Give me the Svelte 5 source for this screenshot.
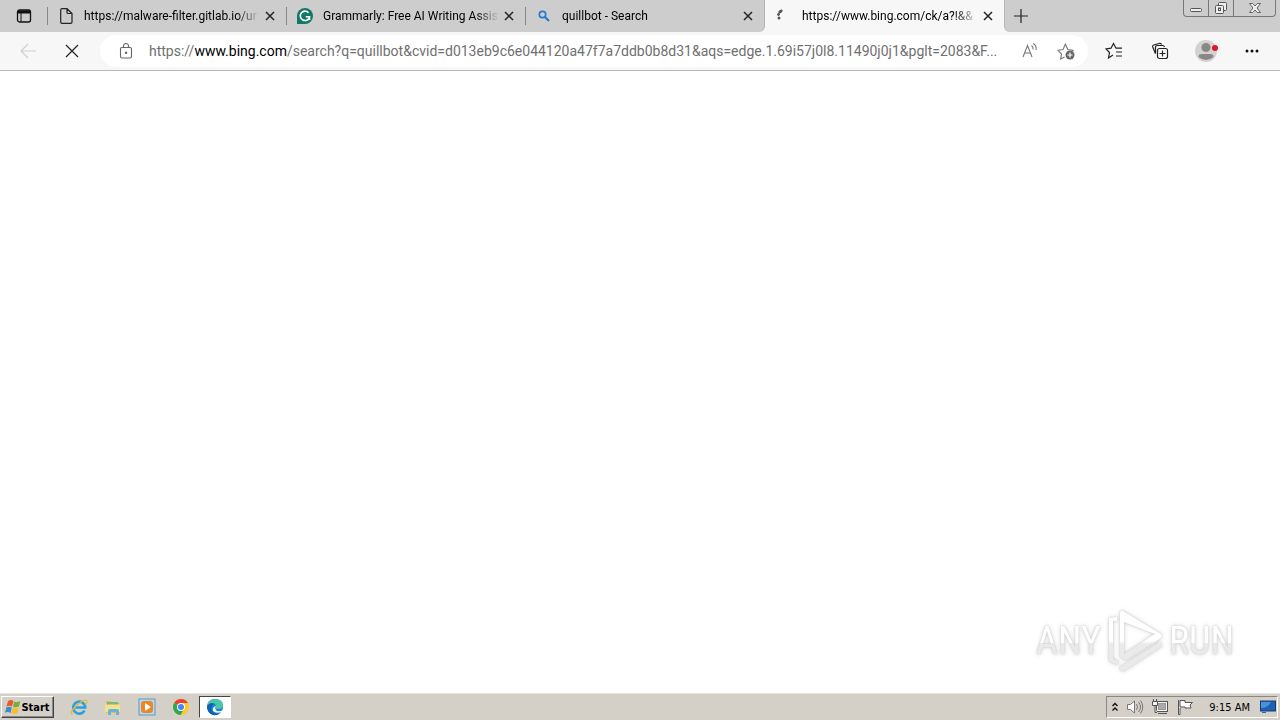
<script lang="ts">
  interface Tab {
    title: string;
    icon: 'page' | 'grammarly' | 'search' | 'loading';
  }

  const tabs: Tab[] = [
    { title: 'https://malware-filter.gitlab.io/ur', icon: 'page' },
    { title: 'Grammarly: Free AI Writing Assist', icon: 'grammarly' },
    { title: 'quillbot - Search', icon: 'search' },
    { title: 'https://www.bing.com/ck/a?!&&', icon: 'loading' },
  ];

  let active = $state(3);
</script>

<div class="desktop">
  <header class="tab-strip">
    <button class="tab-actions" aria-label="Tab actions menu">
      <svg width="16" height="16" viewBox="0 0 16 16" fill="none" stroke="#111">
        <rect x="1.5" y="2" width="13" height="12" rx="2" stroke-width="1.3" />
        <path d="M2 4h12" stroke-width="3" />
        <path d="M5 5v9" />
      </svg>
    </button>
    <div class="tabs">
      {#each tabs as tab, i}
        <div class="tab" class:active={active === i}>
          <button class="tab-label" onclick={() => (active = i)}>
            <span class="favicon">
              {#if tab.icon === 'page'}
                <svg width="16" height="16" viewBox="0 0 16 16" fill="none" stroke="#222" stroke-width="1.2">
                  <path d="M4 .7h5L14 5.5V14q0 1.300-1.300 1.300H4Q2.700 15.300 2.700 14V2Q2.700.7 4 .7M9 .7v3.800q0 1 1 1h4" />
                </svg>
              {:else if tab.icon === 'grammarly'}
                <svg width="16" height="16" viewBox="0 0 16 16">
                  <path d="M8 0a8 8 0 1 1 0 16H0V8a8 8 0 0 1 8-8Z" fill="#117865" />
                  <path d="M11.500 4.700A4.700 4.700 0 1 0 12.500 9.200M8.800 8.800h3.700v3.300" fill="none" stroke="#fff" stroke-width="1.600" />
                </svg>
              {:else if tab.icon === 'search'}
                <svg width="16" height="16" viewBox="0 0 16 16" fill="none" stroke="#2b78d0">
                  <circle cx="6.500" cy="6.500" r="3.200" stroke-width="1.700" />
                  <path d="m9 9 4 4" stroke-width="2.200" />
                </svg>
              {:else}
                <svg width="16" height="16" viewBox="0 0 16 16" fill="#555">
                  <ellipse cx="4.500" cy="3.500" rx="2.400" ry="1.500" transform="rotate(-35 4.500 3.500)" />
                  <circle cx="2.500" cy="6.500" r="1.400" />
                  <circle cx="3" cy="10" r="1.500" />
                </svg>
              {/if}
            </span>
            <span class="tab-title">{tab.title}</span>
          </button>
          <button class="tab-close" aria-label="Close tab">
            <svg width="10" height="10" viewBox="0 0 10 10" stroke="#222" stroke-width="1.500">
              <path d="m1 1 8 8M9 1 1 9" />
            </svg>
          </button>
        </div>
      {/each}
    </div>
    <div class="strip-end">
      <button class="new-tab" aria-label="New tab">
        <svg width="14" height="14" viewBox="0 0 14 14" stroke="#222" stroke-width="1.200">
          <path d="M7 0v14M0 7h14" />
        </svg>
      </button>
      <div class="window-controls">
        <button aria-label="Minimize">
          <svg width="14" height="14" viewBox="0 0 14 14" fill="#eee" stroke="#555">
            <rect x="1.500" y="7.500" width="11" height="3" rx="1" />
          </svg>
        </button>
        <button aria-label="Restore">
          <svg width="14" height="14" viewBox="0 0 14 14" fill="#eee" stroke="#555">
            <rect x="4.500" y="1.500" width="8" height="8" rx="1" />
            <rect x="1.500" y="4.500" width="8" height="8" rx="1" />
            <rect x="4.500" y="7" width="2" height="2.500" />
          </svg>
        </button>
        <button aria-label="Close">
          <svg width="14" height="14" viewBox="0 0 14 14" fill="#eee" stroke="#666">
            <path d="M1.500 2.500h3.200L7 5l2.300-2.500h3.200L9 7l3.500 4.500H9.300L7 9l-2.300 2.500H1.500L5 7Z" />
          </svg>
        </button>
      </div>
    </div>
  </header>

  <div class="toolbar">
    <div class="nav">
      <button class="tool" aria-label="Back" disabled>
        <svg width="18" height="16" viewBox="0 0 18 16" fill="none" stroke="#cfcfcf" stroke-width="1.200">
          <path d="M17 8H2M9 1 2 8l7 7" />
        </svg>
      </button>
      <button class="tool" aria-label="Stop">
        <svg width="14" height="14" viewBox="0 0 14 14" stroke="#222" stroke-width="1.200">
          <path d="m1 1 12 12M13 1 1 13" />
        </svg>
      </button>
    </div>
    <div class="address">
      <button class="lock" aria-label="View site information">
        <svg width="14" height="16" viewBox="0 0 14 16" fill="none" stroke="#666" stroke-width="1.100">
          <rect x="1.500" y="4.500" width="11" height="10.500" rx="1.500" />
          <path d="M4.500 4.500V3a2.500 2.500 0 0 1 5 0v1.500" />
          <circle cx="7" cy="9.700" r=".7" fill="#555" />
        </svg>
      </button>
      <a class="url" href="https://www.bing.com/search?q=quillbot">https://<b>www.bing.com</b>/search?q=quillbot&amp;cvid=d013eb9c6e044120a47f7a7ddb0b8d31&amp;aqs=edge.1.69i57j0l8.11490j0j1&amp;pglt=2083&amp;F...</a>
      <button class="field-action" aria-label="Read aloud">
        <svg width="18" height="18" viewBox="0 0 18 18" fill="none" stroke="#777" stroke-width="1.100">
          <path d="M2 15 6.500 3.500 11 15M3.500 11h6M10.500 3.500q2 1.500 1.500 4M12 1.500q4 2 3 6.500" />
        </svg>
      </button>
      <button class="field-action" aria-label="Add to favorites">
        <svg width="18" height="18" viewBox="0 0 18 18">
          <path d="M7.500 15 3.700 17l.8-5L1 8.300l5-.8 2.400-5.300 2.400 5.300 5.200.8-1.500 1.500" fill="none" stroke="#777" stroke-width="1.100" />
          <circle cx="13" cy="13" r="4.500" fill="#666" />
          <path d="M13 10.500v5M10.500 13h5" stroke="#fff" stroke-width="1.200" />
        </svg>
      </button>
    </div>
    <div class="tools">
      <button class="tool" aria-label="Favorites">
        <svg width="18" height="18" viewBox="0 0 18 18" fill="none" stroke="#222" stroke-width="1.200">
          <path d="m8 13-4.500 3 1-5.500L1 7l5-.8 2.500-4.700L11 6.200h6M11 10h6M11 14h6" />
        </svg>
      </button>
      <button class="tool" aria-label="Collections">
        <svg width="18" height="18" viewBox="0 0 18 18" fill="none" stroke="#222" stroke-width="1.200">
          <path d="M4.500 11.500 1.700 5q-.5-1.500 1-2L8 1.500q2-.6 2.700 1" />
          <path d="M4.500 11.500V5.500q0-2 2-2h5q1.500 0 2 1.500" />
          <rect x="6.500" y="6.500" width="10" height="10" rx="2" />
          <path d="M11.500 8.500v6M8.500 11.500h6" />
        </svg>
      </button>
      <button class="tool" aria-label="Profile">
        <svg width="24" height="24" viewBox="0 0 24 24">
          <circle cx="12" cy="12" r="11" fill="#d4d2d0" />
          <circle cx="12" cy="8.500" r="4.500" fill="#8a8886" />
          <path d="M4.500 18q0-3 3-3h9q3 0 3 3a11 11 0 0 1-15 0Z" fill="#8a8886" />
          <circle cx="21" cy="9" r="3" fill="#e01525" />
        </svg>
      </button>
      <button class="tool" aria-label="Settings and more">
        <svg width="14" height="4" viewBox="0 0 14 4" fill="#111">
          <circle cx="2" cy="2" r="1.500" /><circle cx="7" cy="2" r="1.500" /><circle cx="12" cy="2" r="1.500" />
        </svg>
      </button>
    </div>
  </div>

  <main class="page">
    <div class="watermark">
      <span>ANY</span>
      <svg width="56" height="62" viewBox="0 0 56 62" fill="none" stroke-linejoin="round">
        <defs>
          <linearGradient id="shine" x1="0" y1="0" x2="0" y2="62" gradientUnits="userSpaceOnUse">
            <stop offset=".5" stop-color="#fff" />
            <stop offset=".55" stop-color="#eaeaea" />
          </linearGradient>
        </defs>
        <path fill="url(#shine)" fill-rule="evenodd" d="M13 3Q13 0 16 1L54 24q2 1 0 4L19 50l-6-3ZM17 12v32l29-19 2-1Z" />
        <path fill="url(#shine)" d="M2 8 10 7v4H6v38l5 2v4l-9-4ZM13 57l40-25 2 4-38 25-4-1Z" />
      </svg>
      <span>RUN</span>
    </div>
  </main>

  <footer class="taskbar">
    <button class="start">
      <svg width="16" height="16" viewBox="0 0 16 16">
        <path d="M3 2q3-2 5.500 0L7 7.500q-2.500-1.500-5.500 0Z" fill="#e95b2b" />
        <path d="M9.200 2.500q3 1.500 6-.5L14 7.500q-3 1.500-6 .3Z" fill="#79ae32" />
        <path d="M1.300 8.500q3-1.500 5.500 0L5.500 14Q3 12.300 0 13.800Z" fill="#368bd2" />
        <path d="M7.800 8.800q3 1.500 6-.3L12.300 14q-3 1.700-6 0Z" fill="#f7bd27" />
      </svg>
      Start
    </button>
    <nav class="launchers">
      <button aria-label="Internet Explorer">
        <svg width="18" height="18" viewBox="0 0 18 18" fill="none">
          <path d="M14.500 12.500A6 6 0 1 1 15.200 9.500H5" stroke="#2ba1df" stroke-width="2.600" />
          <path d="M2.500 16.500Q-1 15 6 8 14 .5 16.500 2.500q1 1-1 4" stroke="#e5b93c" stroke-width="1.400" />
        </svg>
      </button>
      <button aria-label="Windows Explorer">
        <svg width="18" height="18" viewBox="0 0 18 18">
          <path d="M2 3h5l1 2h8v10H2Z" fill="#e9bd55" />
          <path d="M3 4h11v3H3Z" fill="#79b979" />
          <path d="M1 6.500h15V14H1Z" fill="#f8df8c" />
          <path d="M4 17v-4q0-2 2-2h7q2 0 2 2v4h-3v-3H7v3Z" fill="#66b5dc" />
        </svg>
      </button>
      <button aria-label="Windows Media Player">
        <svg width="18" height="18" viewBox="0 0 18 18">
          <rect x="1" y="1" width="16" height="16" fill="#b8d9f4" stroke="#579acb" />
          <rect x="3" y="3" width="12" height="12" rx="3" fill="#ef861d" />
          <path d="m7 5 6 4-6 4Z" fill="#fff" />
        </svg>
      </button>
      <button aria-label="Google Chrome">
        <svg width="18" height="18" viewBox="0 0 18 18">
          <circle cx="9" cy="9" r="8" fill="#ffc928" />
          <path d="M9 9 2.100 5A8 8 0 0 1 16 5H9Z" fill="#e64335" />
          <path d="m9 9-6.900-4A8 8 0 0 0 8.500 17L12 11Z" fill="#31a653" />
          <circle cx="9" cy="9" r="4" fill="#fff" />
          <circle cx="9" cy="9" r="3" fill="#4285f4" />
        </svg>
      </button>
      <button class="running" aria-label="Microsoft Edge">
        <svg width="18" height="18" viewBox="0 0 18 18">
          <circle cx="9" cy="9" r="8" fill="#1784d4" />
          <path d="M1 8Q2 1 9 1q8 0 8 6 0 4-5 4-3 0-2-2 0-4-4-4Q3 5 1 8Z" fill="#4bc6a5" />
          <path d="M1 8q3-4 7-2-4 3-2 7 2 4 8 2-3 3-7 2Q1 15 1 8Z" fill="#1260b4" />
          <path d="M10 8q-2 3 1 5 3 1 6-1l-1 2q-6 2-9-1-1-4 3-5Z" fill="#fff" />
        </svg>
      </button>
    </nav>
    <div class="tray">
      <button aria-label="Show hidden icons">
        <svg width="8" height="10" viewBox="0 0 8 10" fill="none" stroke="#111" stroke-width="1.400">
          <path d="m1.500 4 2.500-2.500L6.500 4M1.500 8.500 4 6l2.500 2.500" />
        </svg>
      </button>
      <button aria-label="Volume">
        <svg width="18" height="16" viewBox="0 0 18 16" fill="#fff" stroke="#777">
          <path d="M1.500 5.500h3L8.500 2v12l-4-3.500h-3Z" />
          <path d="M10.500 5q2 3 0 6M12.500 3q4 5 0 10M14.500 1.500q4.500 6.500 0 13" fill="none" />
        </svg>
      </button>
      <button aria-label="Network">
        <svg width="18" height="16" viewBox="0 0 18 16" fill="#f2f2f2" stroke="#555">
          <rect x="5.500" y="2.500" width="11" height="10" />
          <rect x="7.500" y="4.500" width="7" height="6" fill="#aaa" stroke="#999" />
          <path d="M7 14.500h9M1.500 2.500h5v4h-5ZM2.500 0v2M5.500 0v2M4 7v6.500h2" />
        </svg>
      </button>
      <button aria-label="Action Center">
        <svg width="18" height="16" viewBox="0 0 18 16" fill="#fff" stroke="#555">
          <path d="M2.500 1v14.500h1.500V9M4 1.500h5v2h7.500L14 6l1 3H9V8H4Z" />
        </svg>
      </button>
      <time>9:15 AM</time>
      <button class="show-desktop" aria-label="Show desktop">
        <svg width="16" height="14" viewBox="0 0 16 14">
          <rect x=".5" y="1" width="15" height="10" fill="#1d61b5" stroke="#174077" />
          <path d="M1 8q7 0 10-6H1Z" fill="#4b91d9" />
          <path d="M2 12.500h4" stroke="#346ca5" />
        </svg>
      </button>
    </div>
  </footer>
</div>

<style>
  :global(body) {
    background: #fff;
  }

  .desktop {
    display: flex;
    flex-direction: column;
    min-height: 100vh;
    font-family: Roboto, "Noto Sans", sans-serif;
    font-size: 12px;
    color: #000;
  }

  button {
    display: flex;
    align-items: center;
    justify-content: center;
    padding: 0;
    border: 0;
    background: none;
    color: inherit;
    font: inherit;
  }

  svg {
    display: block;
    flex-shrink: 0;
  }

  .tab-strip {
    display: flex;
    height: 32px;
    background: #f7f7f7;
  }

  .tab-actions {
    width: 47px;
    background: #cdcdcd;
  }

  .tabs {
    display: flex;
    flex: 0 1 957px;
    min-width: 0;
  }

  .tab {
    display: flex;
    flex: 1;
    align-items: center;
    min-width: 0;
    padding: 0 8px 0 11px;
    box-sizing: border-box;
    background: linear-gradient(#888, #888) 0 7px / 1px 18px no-repeat #cdcdcd;
  }

  .tab.active {
    background: #f7f7f7;
  }

  .tab:has(+ .active) {
    border-right: 1px solid #b5b5b5;
    border-bottom-right-radius: 6px;
  }

  .tab-label {
    flex: 1;
    justify-content: flex-start;
    gap: 10px;
    min-width: 0;
    height: 100%;
  }

  .tab-title {
    flex: 1;
    overflow: hidden;
    text-align: left;
    white-space: nowrap;
    mask-image: linear-gradient(to left, transparent, #000 24px);
  }

  .tab-close {
    width: 16px;
    height: 16px;
    margin-left: 2px;
  }

  .strip-end {
    display: flex;
    flex: 1;
    justify-content: space-between;
    align-items: flex-start;
    padding-right: 4px;
    border-left: 1px solid #b5b5b5;
    border-bottom-left-radius: 6px;
    background: #cdcdcd;
  }

  .new-tab {
    width: 32px;
    height: 32px;
  }

  .window-controls {
    display: flex;
    height: 16px;
    border: 1px solid #777;
    border-top: 0;
    border-radius: 0 0 4px 4px;
  }

  .window-controls button {
    width: 25px;
    border-right: 1px solid #777;
  }

  .window-controls button:last-child {
    width: 41px;
    border-right: 0;
  }

  .toolbar {
    display: flex;
    align-items: center;
    height: 38px;
    padding: 0 12px;
    border-bottom: 1px solid #b8b8b8;
    background: #f7f7f7;
  }

  .tool {
    width: 32px;
    height: 32px;
  }

  .nav {
    display: flex;
    gap: 12px;
  }

  .tools {
    display: flex;
    gap: 14px;
  }

  .address {
    display: flex;
    flex: 1;
    align-items: center;
    min-width: 0;
    height: 32px;
    margin: 0 10px 0 12px;
    padding: 0 8px 0 16px;
    border-radius: 16px;
    background: #fff;
  }

  .lock {
    width: 20px;
    margin-right: 13px;
  }

  .url {
    flex: 1;
    overflow: hidden;
    color: #707070;
    font-size: 14px;
    text-decoration: none;
    white-space: nowrap;
  }

  .url b {
    color: #000;
    font-weight: 400;
  }

  .field-action {
    width: 28px;
    height: 28px;
    margin-left: 8px;
  }

  .page {
    display: flex;
    flex: 1;
    justify-content: flex-end;
    align-items: flex-end;
    padding: 0 46px 21px;
    background: #fff;
  }

  .watermark {
    display: flex;
    align-items: center;
    gap: 6px;
    filter: drop-shadow(0 0 1px #ccc) drop-shadow(0 0 2px #ddd);
    font-family: "Liberation Sans Narrow", "Roboto Condensed", "Liberation Sans", sans-serif;
    font-size: 38px;
    line-height: 48px;
  }

  .watermark span {
    background: linear-gradient(#fff 55%, #eaeaea 55%);
    background-clip: text;
    color: transparent;
  }

  .taskbar {
    display: flex;
    align-items: center;
    height: 26px;
    padding: 0 2px 0 1px;
    border-top: 1px solid #e8e5e0;
    background: #d4d0c8;
    font-family: "DejaVu Sans Condensed", "DejaVu Sans", sans-serif;
    font-size: 11px;
  }

  .start {
    width: 53px;
    height: 22px;
    box-sizing: border-box;
    border: 1px solid;
    border-color: #fff #444 #444 #fff;
    box-shadow: inset -1px -1px #888;
    font-weight: 700;
  }

  .launchers {
    display: flex;
    gap: 2px;
    margin-left: 9px;
  }

  .launchers button {
    width: 32px;
    height: 22px;
    box-sizing: border-box;
  }

  .launchers .running {
    border: 1px solid;
    border-color: #444 #fff #fff #444;
    background: #fff;
  }

  .tray {
    display: flex;
    align-items: center;
    gap: 7px;
    height: 22px;
    margin-left: auto;
    padding: 0 1px 0 4px;
    box-sizing: border-box;
    border: 1px solid;
    border-color: #888 #fff #fff #888;
  }

  time {
    margin: 0 3px 0 8px;
  }
</style>
